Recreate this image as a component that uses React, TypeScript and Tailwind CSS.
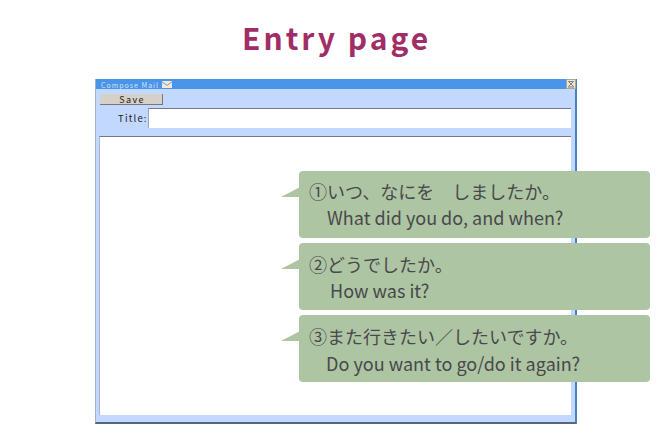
const notes = [
  { ja: '①いつ、なにを　しましたか。', en: 'What did you do, and when?', indent: 'ml-[18px]', top: 'pt-[7px]', jaHeight: 'h-[26px]' },
  { ja: '②どうでしたか。', en: 'How was it?', indent: 'ml-[21px]', top: 'pt-[8px]', jaHeight: 'h-[26px]' },
  { ja: '③また行きたい／したいですか。', en: 'Do you want to go/do it again?', indent: 'ml-[17px]', top: 'pt-[8px]', jaHeight: 'h-[27px]' },
];

function MailIcon() {
  return (
    <svg className="ml-[3px] h-[7px] w-[10px]" viewBox="0 0 10 7">
      <rect width="10" height="7" fill="#f3e8d8" />
      <path d="M0 .8 5 4.4 10 .8" fill="none" stroke="#6d9bd4" strokeWidth="1" />
    </svg>
  );
}

function CloseIcon() {
  return (
    <svg className="h-[10px] w-[10px]" viewBox="0 0 10 10">
      <rect x=".5" y=".5" width="9" height="9" fill="#e9e5dc" stroke="#aaa79f" />
      <path d="M2.5 2.5 7.5 7.5M7.5 2.5 2.5 7.5M2.5 2.5H7.5M2 8H8" fill="none" stroke="#77736d" strokeWidth=".9" />
    </svg>
  );
}

type NoteProps = { ja: string; en: string; indent: string; top: string; jaHeight: string };

function Note({ ja, en, indent, top, jaHeight }: NoteProps) {
  return (
    <div className={`relative h-[67px] rounded-[4px] bg-[#aec5a3] pl-[10px] whitespace-nowrap text-[#48494b] ${top}`}>
      <svg className="absolute top-[15px] -left-[18px] h-[12px] w-[19px]" viewBox="0 0 19 12">
        <path d="M0 11 19 1V11Z" fill="#aec5a3" />
      </svg>
      <p className={`text-[18px] leading-[26px] ${jaHeight}`}>{ja}</p>
      <p className={`h-[26px] origin-left scale-x-[0.975] text-[18.5px] leading-[26px] ${indent}`}>{en}</p>
    </div>
  );
}

export default function App() {
  return (
    <div className="relative h-[444px] w-[670px] overflow-hidden bg-white font-['Noto_Sans_CJK_JP',sans-serif]">
      <h1 className="h-[79px] pt-[15px] pl-[242px] text-[30px] leading-[44px] font-bold tracking-[3px] whitespace-nowrap text-[#a12d66]">
        Entry page
      </h1>
      <section className="ml-[95px] flex h-[345px] w-[482px] flex-col border-r-2 border-b-2 border-l border-r-[#487fc7] border-b-[#56667f] border-l-[#a5b3c9] bg-[#c3d8ff]">
        <header className="flex h-[10px] shrink-0 items-center bg-[#4a94e9] pl-[5px]">
          <span className="pt-px text-[7px] leading-[10px] tracking-[1px] text-[#d3e3f6]">Compose Mail</span>
          <MailIcon />
          <span className="-mr-px ml-auto"><CloseIcon /></span>
        </header>
        <button className="mt-[5px] ml-[4px] flex h-[11px] w-[63px] shrink-0 items-center justify-center border-r border-b border-[#77777c] bg-[#d6d1c8] pt-px pl-[2px] text-[9px] leading-[10px] tracking-[1.4px] text-[#222]">
          Save
        </button>
        <div className="mt-[3px] flex h-[20px] shrink-0 items-center">
          <label className="w-[52px] pl-[22px] text-[9.5px] leading-[20px] tracking-[1.2px] text-[#222]">Title:</label>
          <div className="mr-[4px] h-[20px] flex-1 border-t border-l border-t-[#747982] border-l-[#9ba8bd] bg-white" />
        </div>
        <div className="mt-[8px] mr-[4px] mb-[7px] ml-[3px] flex-1 border-t border-l border-t-[#747982] border-l-[#a8b7cf] bg-white" />
      </section>
      <aside className="absolute top-[171px] left-[299px] flex w-[351px] flex-col gap-[5px]">
        {notes.map((note) => <Note key={note.ja} {...note} />)}
      </aside>
    </div>
  );
}
